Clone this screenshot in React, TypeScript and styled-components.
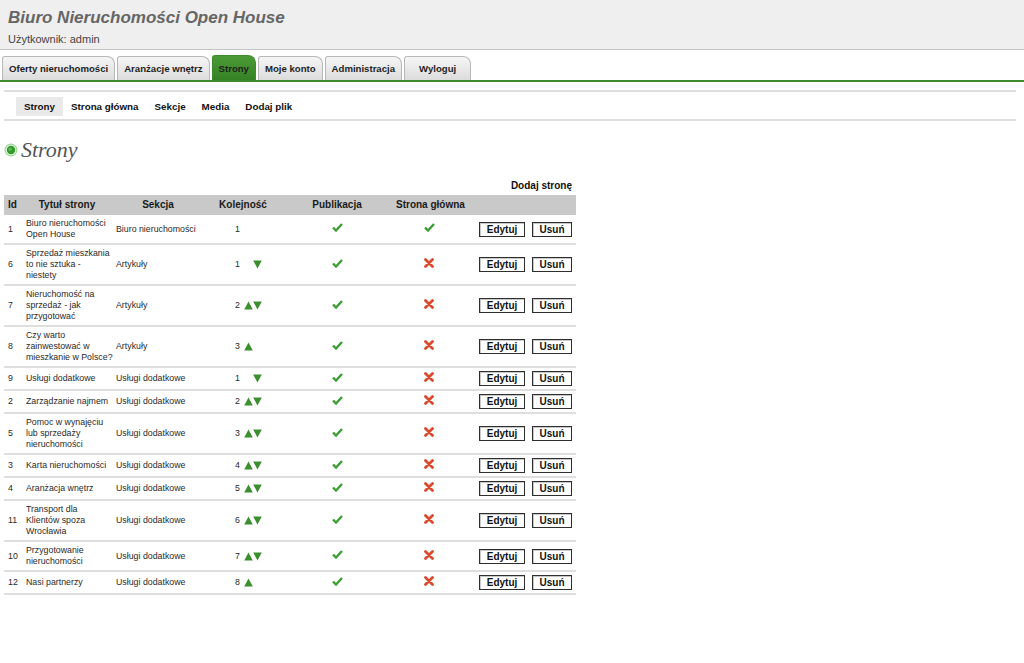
import styled, { createGlobalStyle } from "styled-components";

const GlobalStyle = createGlobalStyle`
  body {
    margin: 0;
    background: #fff;
    font-family: "Liberation Sans", Arial, sans-serif;
    color: #222;
  }
`;

type PageRow = {
  id: number;
  title: string[];
  section: string;
  order: number;
  up?: boolean;
  down?: boolean;
  home?: boolean;
};

const rows: PageRow[] = [
  { id: 1, title: ["Biuro nieruchomości", "Open House"], section: "Biuro nieruchomości", order: 1, home: true },
  { id: 6, title: ["Sprzedaż mieszkania", "to nie sztuka -", "niestety"], section: "Artykuły", order: 1, down: true },
  { id: 7, title: ["Nieruchomość na", "sprzedaż - jak", "przygotować"], section: "Artykuły", order: 2, up: true, down: true },
  { id: 8, title: ["Czy warto", "zainwestować w", "mieszkanie w Polsce?"], section: "Artykuły", order: 3, up: true },
  { id: 9, title: ["Usługi dodatkowe"], section: "Usługi dodatkowe", order: 1, down: true },
  { id: 2, title: ["Zarządzanie najmem"], section: "Usługi dodatkowe", order: 2, up: true, down: true },
  { id: 5, title: ["Pomoc w wynajęciu", "lub sprzedaży", "nieruchomości"], section: "Usługi dodatkowe", order: 3, up: true, down: true },
  { id: 3, title: ["Karta nieruchomości"], section: "Usługi dodatkowe", order: 4, up: true, down: true },
  { id: 4, title: ["Aranżacja wnętrz"], section: "Usługi dodatkowe", order: 5, up: true, down: true },
  { id: 11, title: ["Transport dla", "Klientów spoza", "Wrocławia"], section: "Usługi dodatkowe", order: 6, up: true, down: true },
  { id: 10, title: ["Przygotowanie", "nieruchomości"], section: "Usługi dodatkowe", order: 7, up: true, down: true },
  { id: 12, title: ["Nasi partnerzy"], section: "Usługi dodatkowe", order: 8, up: true },
];

const tabs = ["Oferty nieruchomości", "Aranżacje wnętrz", "Strony", "Moje konto", "Administracja", "Wyloguj"];
const subLinks = ["Strony", "Strona główna", "Sekcje", "Media", "Dodaj plik"];

// naglowek
const Header = styled.header`
  height: 50px;
  background: #efefef;
  border-bottom: 1px solid #c4c4c4;
  padding: 8px 8px 0;
  box-sizing: border-box;
`;

const SiteTitle = styled.h1`
  margin: 0;
  font-size: 17px;
  line-height: 20px;
  font-style: italic;
  font-weight: bold;
  color: #666;
`;

const UserLine = styled.div`
  margin-top: 4px;
  font-size: 11px;
  line-height: 14px;
  color: #444;
`;

const TabBar = styled.nav`
  display: flex;
  align-items: flex-end;
  gap: 2px;
  margin-top: 5px;
  padding-left: 2px;
  border-bottom: 2px solid #3d8b2c;
`;

const Tab = styled.div<{ $active?: boolean; $wide?: boolean }>`
  height: ${(p) => (p.$active ? 25 : 24)}px;
  box-sizing: border-box;
  display: flex;
  align-items: center;
  justify-content: center;
  padding: 0 ${(p) => (p.$wide ? 14 : 6)}px;
  font-size: 9.6px;
  font-weight: bold;
  white-space: nowrap;
  color: #1e1e1e;
  border: 1px solid ${(p) => (p.$active ? "#3d8b2c" : "#b8b8b8")};
  border-bottom: none;
  border-radius: 3px 8px 0 0;
  background: ${(p) =>
    p.$active ? "linear-gradient(#4c9a36, #348224)" : "linear-gradient(#f6f6f6, #dcdcdc)"};
`;

const Main = styled.main`
  padding: 0 8px 0 4px;
`;

const SubNav = styled.div`
  margin-top: 8px;
  display: flex;
  padding: 5px 12px 3px;
  border-top: 2px solid #dedede;
  border-bottom: 2px solid #dedede;
`;

const SubLink = styled.span<{ $active?: boolean }>`
  height: 19px;
  display: flex;
  align-items: center;
  padding: 0 8px;
  font-size: 9.8px;
  font-weight: bold;
  color: #111;
  background: ${(p) => (p.$active ? "#e9e9e9" : "transparent")};
`;

const PageHeading = styled.h2`
  margin: 16px 0 0;
  display: flex;
  align-items: center;
  gap: 3px;
  height: 26px;
  font-family: "Liberation Serif", "Times New Roman", serif;
  font-style: italic;
  font-weight: normal;
  font-size: 22px;
  color: #555;
`;

const TableWrap = styled.div`
  width: 572px;
`;

const AddLink = styled.div`
  margin-top: 17px;
  margin-bottom: 3px;
  padding-right: 4px;
  text-align: right;
  font-size: 10px;
  line-height: 12px;
  font-weight: bold;
  color: #111;
`;

const Table = styled.table`
  width: 572px;
  table-layout: fixed;
  border-collapse: collapse;
  font-size: 8.8px;
  line-height: 11px;
`;

const HeadCell = styled.th<{ $left?: boolean }>`
  background: #c9c9c9;
  padding: 4px 4px 5px;
  font-size: 10px;
  line-height: 11px;
  font-weight: bold;
  white-space: nowrap;
  color: #1a1a1a;
  text-align: ${(p) => (p.$left ? "left" : "center")};
`;

const Row = styled.tr`
  border-bottom: 2px solid #dedede;
`;

const Cell = styled.td<{ $align?: "left" | "center" | "right"; $padLeft?: number }>`
  padding: 3px 4px 3px ${(p) => p.$padLeft ?? 4}px;
  vertical-align: middle;
  text-align: ${(p) => p.$align ?? "left"};
  color: #2a2a2a;
  white-space: nowrap;
`;

const OrderBox = styled.div`
  display: flex;
  align-items: center;
`;

const OrderNum = styled.span`
  width: 9px;
`;

const ArrowSlot = styled.span`
  width: 9px;
  height: 9px;
  display: inline-flex;
`;

const Actions = styled.div`
  display: flex;
  justify-content: flex-end;
  gap: 7px;
`;

const Button = styled.button<{ $w: number }>`
  width: ${(p) => p.$w}px;
  height: 15px;
  padding: 0;
  box-sizing: border-box;
  font-family: "Liberation Sans", Arial, sans-serif;
  font-size: 10px;
  font-weight: bold;
  color: #111;
  background: #fff;
  border: 1px solid #2e2e2e;
  box-shadow: inset 1px 1px 0 #c8c8c8;
  line-height: 13px;
`;

const Bullet = () => (
  <svg width="14" height="14" viewBox="0 0 14 14">
    <circle cx="7" cy="7" r="6.5" fill="#9fd596" />
    <circle cx="7" cy="7" r="5.3" fill="#e8f6e5" />
    <circle cx="7" cy="7" r="4.2" fill="#2f9a2a" />
    <circle cx="6.2" cy="6.2" r="1.8" fill="#58bb4e" />
  </svg>
);

const Check = () => (
  <svg width="11" height="9" viewBox="0 0 11 9">
    <path d="M1 4.5 L4 7.5 L10 1" fill="none" stroke="#3d9e34" strokeWidth="2.4" strokeLinejoin="miter" />
  </svg>
);

const Cross = () => (
  <svg width="10" height="10" viewBox="0 0 10 10">
    <path d="M1.5 1.5 L8.5 8.5 M8.5 1.5 L1.5 8.5" stroke="#da4a2e" strokeWidth="2.8" strokeLinecap="round" />
  </svg>
);

const Arrow = ({ dir }: { dir: "up" | "down" }) => (
  <svg width="9" height="9" viewBox="0 0 9 9">
    <polygon points={dir === "up" ? "4.5,0.5 8.8,8.5 0.2,8.5" : "0.2,0.5 8.8,0.5 4.5,8.5"} fill="#3b8f2e" />
  </svg>
);

export default function App() {
  return (
    <>
      <GlobalStyle />
      <Header>
        <SiteTitle>Biuro Nieruchomości Open House</SiteTitle>
        <UserLine>Użytkownik: admin</UserLine>
      </Header>
      <TabBar>
        {tabs.map((t) => (
          <Tab key={t} $active={t === "Strony"} $wide={t === "Wyloguj"}>
            {t}
          </Tab>
        ))}
      </TabBar>
      <Main>
        <SubNav>
          {subLinks.map((s, i) => (
            <SubLink key={s} $active={i === 0}>
              {s}
            </SubLink>
          ))}
        </SubNav>
        <PageHeading>
          <Bullet />
          Strony
        </PageHeading>
        <TableWrap>
          <AddLink>Dodaj stronę</AddLink>
          <Table>
            <colgroup>
              <col style={{ width: 18 }} />
              <col style={{ width: 90 }} />
              <col style={{ width: 92 }} />
              <col style={{ width: 78 }} />
              <col style={{ width: 110 }} />
              <col style={{ width: 74 }} />
              <col style={{ width: 110 }} />
            </colgroup>
            <thead>
              <tr>
                <HeadCell $left>Id</HeadCell>
                <HeadCell>Tytuł strony</HeadCell>
                <HeadCell>Sekcja</HeadCell>
                <HeadCell>Kolejność</HeadCell>
                <HeadCell>Publikacja</HeadCell>
                <HeadCell>Strona główna</HeadCell>
                <HeadCell />
              </tr>
            </thead>
            <tbody>
              {rows.map((r) => (
                <Row key={r.id}>
                  <Cell>{r.id}</Cell>
                  <Cell>
                    {r.title.map((line, i) => (
                      <div key={i}>{line}</div>
                    ))}
                  </Cell>
                  <Cell>{r.section}</Cell>
                  <Cell $padLeft={31}>
                    <OrderBox>
                      <OrderNum>{r.order}</OrderNum>
                      {(r.up || r.down) && (
                        <>
                          <ArrowSlot>{r.up && <Arrow dir="up" />}</ArrowSlot>
                          <ArrowSlot>{r.down && <Arrow dir="down" />}</ArrowSlot>
                        </>
                      )}
                    </OrderBox>
                  </Cell>
                  <Cell $align="center">
                    <Check />
                  </Cell>
                  <Cell $align="center">{r.home ? <Check /> : <Cross />}</Cell>
                  <Cell>
                    <Actions>
                      <Button $w={46}>Edytuj</Button>
                      <Button $w={40}>Usuń</Button>
                    </Actions>
                  </Cell>
                </Row>
              ))}
            </tbody>
          </Table>
        </TableWrap>
      </Main>
    </>
  );
}
